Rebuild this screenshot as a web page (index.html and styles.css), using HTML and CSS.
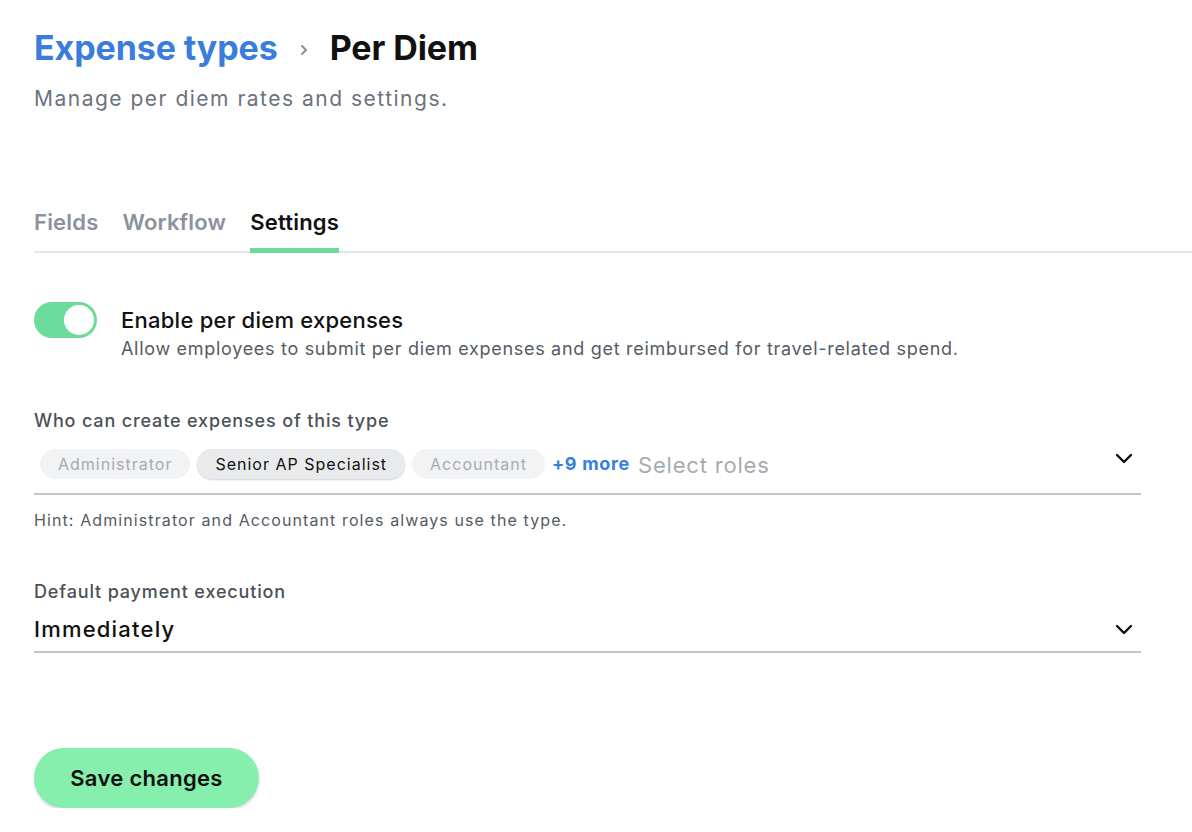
FILE: index.html
```html
<!DOCTYPE html>
<html lang="en">
<head>
    <meta charset="UTF-8">
    <meta name="viewport" content="width=device-width, initial-scale=1.0">
    <title>Per Diem</title>
    <link rel="stylesheet" href="styles.css">
</head>
<body>
    <div class="page">
        <h1 class="crumbs">
            <a href="#" class="crumb-link">Expense types</a>
            <svg class="crumb-sep" width="14" height="14" viewBox="0 0 14 14"><path d="M5 3l4 4-4 4" fill="none" stroke="#8a9099" stroke-width="2" stroke-linecap="round" stroke-linejoin="round"/></svg>
            <span>Per Diem</span>
        </h1>
        <p class="subtitle">Manage per diem rates and settings.</p>

        <nav class="tabs">
            <a href="#" class="tab">Fields</a>
            <a href="#" class="tab">Workflow</a>
            <a href="#" class="tab active">Settings</a>
        </nav>

        <div class="toggle-row">
            <button class="toggle on"><span class="knob"></span></button>
            <div>
                <div class="toggle-title">Enable per diem expenses</div>
                <div class="toggle-desc">Allow employees to submit per diem expenses and get reimbursed for travel-related spend.</div>
            </div>
        </div>

        <div class="field">
            <label class="field-label">Who can create expenses of this type</label>
            <div class="select chips">
                <span class="chip muted">Administrator</span>
                <span class="chip selected">Senior AP Specialist</span>
                <span class="chip muted">Accountant</span>
                <span class="more">+9 more</span>
                <span class="placeholder">Select roles</span>
                <svg class="chevron" width="18" height="18" viewBox="0 0 18 18"><path d="M2 6l7 7 7-7" fill="none" stroke="#111" stroke-width="2.4" stroke-linecap="round" stroke-linejoin="round"/></svg>
            </div>
            <p class="hint">Hint: Administrator and Accountant roles always use the type.</p>
        </div>

        <div class="field payment">
            <label class="field-label">Default payment execution</label>
            <div class="select">
                <span class="value">Immediately</span>
                <svg class="chevron" width="18" height="18" viewBox="0 0 18 18"><path d="M2 6l7 7 7-7" fill="none" stroke="#111" stroke-width="2.4" stroke-linecap="round" stroke-linejoin="round"/></svg>
            </div>
        </div>

        <button class="save">Save changes</button>
    </div>
</body>
</html>
```

FILE: styles.css
```css
body {
    font-family: Inter, "Noto Sans", sans-serif;
    margin: 0;
    padding: 0;
    background: #fff;
    color: #111;
}
.page {
    padding: 26px 0 0 34px;
}
.crumbs {
    display: flex;
    align-items: center;
    gap: 19px;
    margin: 0;
    font-size: 34px;
    font-weight: 700;
    letter-spacing: -0.1px;
    line-height: 44px;
}
.crumb-link {
    color: #3a7ddc;
    text-decoration: none;
}
.crumb-sep {
    margin-top: 3px;
}
.subtitle {
    margin: 13px 0 0;
    font-size: 21px;
    letter-spacing: 1.5px;
    color: #6b7280;
    line-height: 32px;
}
.tabs {
    display: flex;
    gap: 24px;
    margin-top: 90px;
    border-bottom: 2px solid #e8e8e8;
}
.tab {
    font-size: 22px;
    font-weight: 600;
    letter-spacing: 0.2px;
    line-height: 27px;
    color: #8b929c;
    text-decoration: none;
    padding: 4px 0 12px;
    border-bottom: 5px solid transparent;
    margin-bottom: -2px;
}
.tab.active {
    color: #111;
    border-bottom-color: #6ddc9b;
    border-radius: 3px 3px 0 0;
}
.toggle-row {
    display: flex;
    gap: 24px;
    margin-top: 49px;
}
.toggle {
    width: 63px;
    height: 36px;
    border: none;
    border-radius: 18px;
    background: #6ddc9b;
    padding: 3px;
    display: flex;
    justify-content: flex-end;
    flex-shrink: 0;
}
.knob {
    width: 30px;
    height: 30px;
    border-radius: 50%;
    background: #fff;
}
.toggle-title {
    font-size: 22px;
    font-weight: 500;
    letter-spacing: 0.25px;
    line-height: 28px;
    margin-top: 4px;
}
.toggle-desc {
    margin-top: 1px;
    font-size: 18px;
    letter-spacing: 0.7px;
    color: #555b65;
    line-height: 28px;
}
.field {
    width: 1107px;
    margin-top: 45px;
}
.field.payment {
    margin-top: 49px;
}
.field-label {
    display: block;
    font-size: 18px;
    font-weight: 500;
    letter-spacing: 0.85px;
    color: #4b5159;
    line-height: 26px;
}
.select {
    display: flex;
    align-items: center;
    border-bottom: 2px solid #c2c5ca;
    padding: 9px 0 7px;
}
.chips {
    gap: 7px;
    padding: 15px 0 14px 6px;
}
.chip {
    font-size: 16px;
    letter-spacing: 1px;
    padding: 0 18px;
    line-height: 30px;
    border-radius: 15px;
    background: #f2f3f5;
    color: #a6abb2;
}
.chip.selected {
    background: #e9eaec;
    color: #111;
    box-shadow: 0 1px 2px rgba(0, 0, 0, 0.18);
}
.more {
    font-size: 18px;
    font-weight: 700;
    letter-spacing: 0.7px;
    line-height: 30px;
    color: #3a7ddc;
}
.placeholder {
    font-size: 22px;
    letter-spacing: 0.8px;
    line-height: 30px;
    color: #a6abb2;
    margin-left: 1px;
    position: relative;
    top: 1px;
}
.value {
    font-size: 22px;
    font-weight: 500;
    letter-spacing: 1.2px;
    line-height: 30px;
}
.chevron {
    margin-left: auto;
    margin-right: 8px;
}
.chips .chevron {
    margin-top: -13px;
}
.hint {
    margin: 15px 0 0;
    font-size: 16px;
    letter-spacing: 1.1px;
    line-height: 20px;
    color: #555b65;
}
.save {
    margin-top: 95px;
    width: 225px;
    height: 60px;
    border: none;
    border-radius: 30px;
    background: #86efad;
    font-family: inherit;
    font-size: 22px;
    font-weight: 600;
    letter-spacing: 0.3px;
    color: #111;
    box-shadow: 0 2px 3px rgba(0, 0, 0, 0.15);
}
```
